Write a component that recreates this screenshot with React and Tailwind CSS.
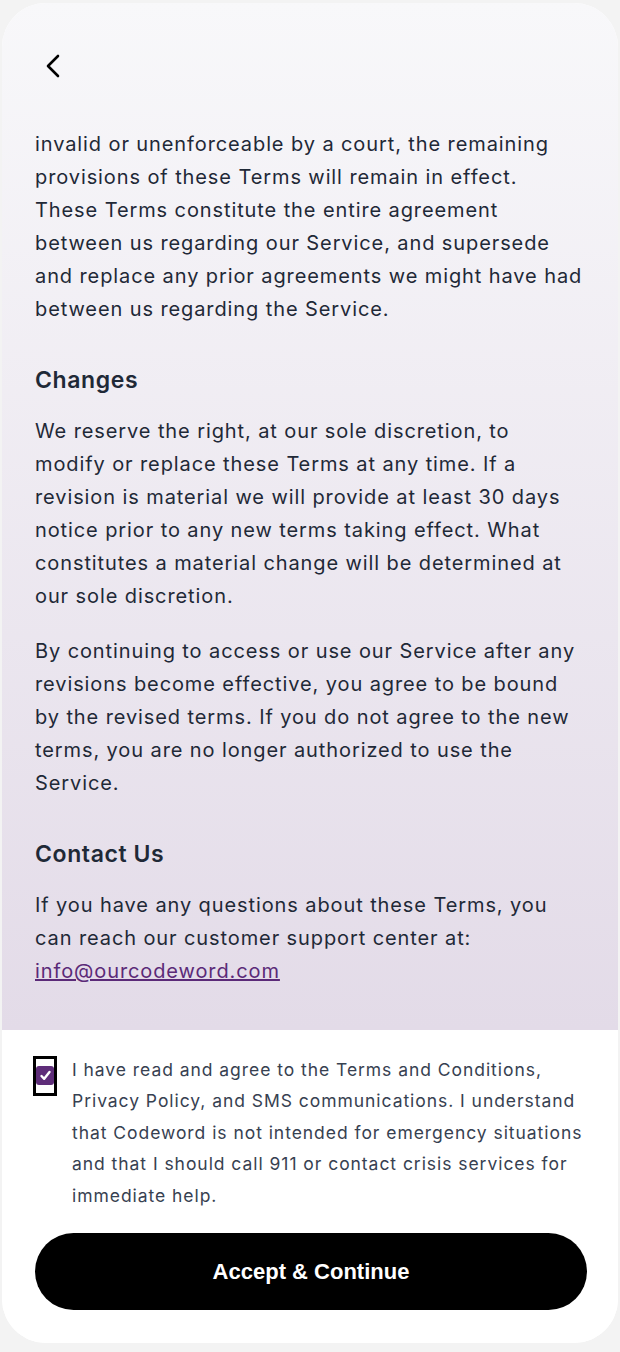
export default function App() {
  return (
    <div className="min-h-screen bg-[#f3f3f3] px-[2px] pt-[3px] pb-[9px]" style={{ fontFamily: 'Inter, "Noto Sans", sans-serif' }}>
      <div className="flex h-[1340px] flex-col overflow-hidden rounded-[44px] bg-white">
        <div className="flex-1 bg-gradient-to-b from-[#f8f8fa] to-[#e3dbe8]">
          <div className="flex h-[125px] items-start pl-[40px] pt-[50px]">
            <svg width="24" height="26" viewBox="0 0 24 26" fill="none" stroke="#000" strokeWidth="2.6" strokeLinecap="round" strokeLinejoin="round">
              <path d="M16 3 L6 13 L16 23" />
            </svg>
          </div>
          <div className="px-[33px] text-[20px] leading-[33px] tracking-[0.9px] text-[#1f2937]">
            <p className="mb-[38px]">
              invalid or unenforceable by a court, the remaining provisions of these Terms will remain in effect. These Terms constitute the entire agreement between us regarding our Service, and supersede and replace any prior agreements we might have had between us regarding the Service.
            </p>
            <h2 className="mb-[19px] text-[23px] font-semibold leading-[32px] tracking-[0.6px]">Changes</h2>
            <p className="mb-[22px]">
              We reserve the right, at our sole discretion, to modify or replace these Terms at any time. If a revision is material we will provide at least 30 days notice prior to any new terms taking effect. What constitutes a material change will be determined at our sole discretion.
            </p>
            <p className="mb-[38px]">
              By continuing to access or use our Service after any revisions become effective, you agree to be bound by the revised terms. If you do not agree to the new terms, you are no longer authorized to use the Service.
            </p>
            <h2 className="mb-[19px] text-[23px] font-semibold leading-[32px] tracking-[0.6px]">Contact Us</h2>
            <p>
              If you have any questions about these Terms, you can reach our customer support center at:{' '}
              <a href="#" className="text-[#5b2a78] underline">info@ourcodeword.com</a>
            </p>
          </div>
        </div>
        <div className="bg-white pl-[33px] pr-[31px] pt-[24px] pb-[33px]">
          <div className="-ml-[2px] flex items-start gap-[15px]">
            <div className="mt-[2px] flex h-[40px] w-[24px] shrink-0 items-center justify-center border-[3px] border-black">
              <div className="flex h-[19px] w-[18px] items-center justify-center rounded-[3px] bg-[#5e2d79]">
                <svg width="13" height="13" viewBox="0 0 13 13" fill="none" stroke="#fff" strokeWidth="2.4" strokeLinecap="round" strokeLinejoin="round">
                  <path d="M2.5 7 L5.2 9.8 L10.5 3" />
                </svg>
              </div>
            </div>
            <p className="text-[17.5px] leading-[31.5px] tracking-[0.95px] text-[#374151]">
              I have read and agree to the Terms and Conditions, Privacy Policy, and SMS communications. I understand that Codeword is not intended for emergency situations and that I should call 911 or contact crisis services for immediate help.
            </p>
          </div>
          <button className="mt-[22px] flex h-[77px] w-full items-center justify-center rounded-full bg-black text-[22px] font-bold text-white" style={{ fontFamily: '"Liberation Sans", Arial, sans-serif' }}>
            Accept &amp; Continue
          </button>
        </div>
      </div>
    </div>
  );
}
